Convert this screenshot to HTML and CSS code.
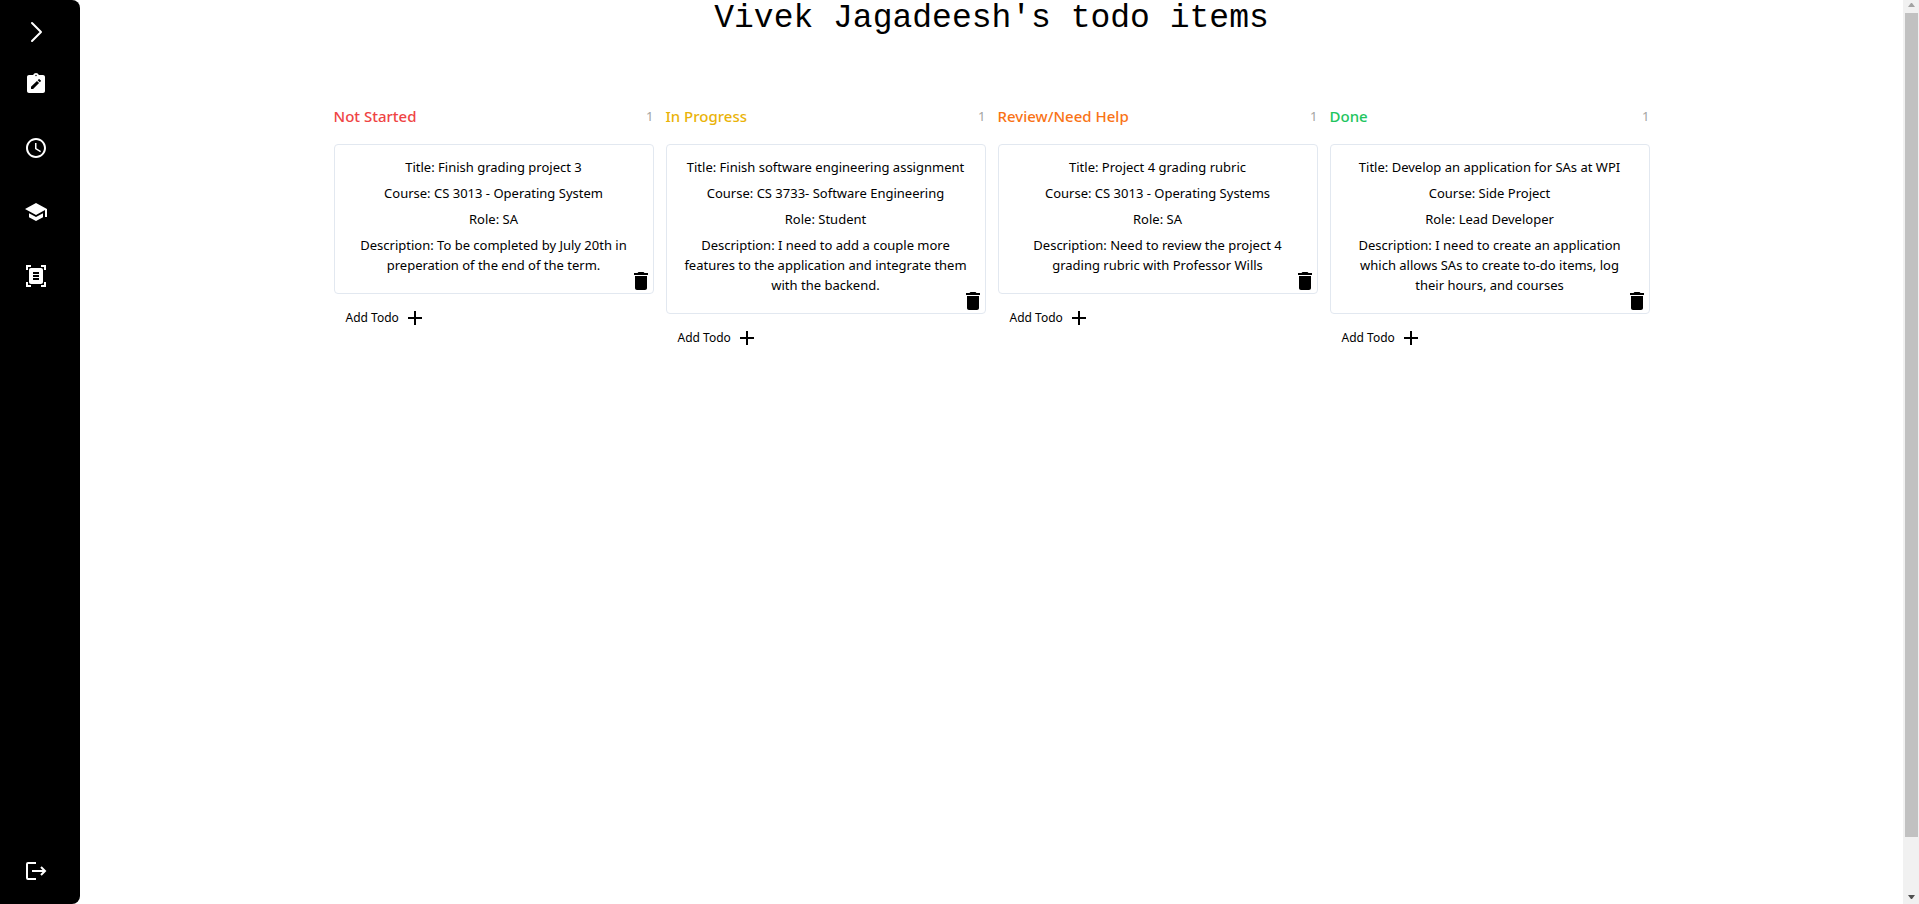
FILE: index.html
```html
<!DOCTYPE html>
<html lang="en">
<head>
<meta charset="utf-8">
<meta name="viewport" content="width=device-width, initial-scale=1">
<title>Todo items</title>
<link rel="stylesheet" href="styles.css">
</head>
<body>
<svg class="sprite" aria-hidden="true">
  <symbol id="trash" viewBox="0 0 24 24"><path d="M6 19c0 1.100.9 2 2 2h8c1.100 0 2-.9 2-2V7H6v12zM19 4h-3.500l-1-1h-5l-1 1H5v2h14V4z"/></symbol>
  <symbol id="plus" viewBox="0 0 24 24"><path d="M19 13h-6v6h-2v-6H5v-2h6V5h2v6h6v2z"/></symbol>
</svg>
<div class="app">
  <nav class="sidebar" aria-label="Main">
    <button class="nav-button expand" aria-label="Expand menu">
      <svg class="icon" viewBox="0 0 24 24"><path d="M8 3l9 9-9 9" fill="none" stroke="currentColor" stroke-width="2" stroke-linecap="round" stroke-linejoin="round"/></svg>
    </button>
    <div class="nav-list">
      <button class="nav-button" aria-label="Todos">
        <svg class="icon" viewBox="0 0 24 24"><path fill-rule="evenodd" d="M19 3h-4.180C14.400 1.840 13.300 1 12 1s-2.400.84-2.820 2H5c-1.100 0-2 .9-2 2v14c0 1.100.9 2 2 2h14c1.100 0 2-.9 2-2V5c0-1.100-.9-2-2-2zM12 2.750a.75.75 0 1 1 0 1.500.75.75 0 0 1 0-1.500zM9.100 17H7v-2.140l5.960-5.960 2.120 2.120L9.100 17zm7.750-7.730l-1.060 1.060-2.120-2.120 1.060-1.060c.2-.2.510-.2.710 0l1.410 1.410c.2.200.2.510 0 .71z"/></svg>
      </button>
      <button class="nav-button" aria-label="Hours">
        <svg class="icon" viewBox="0 0 24 24"><path d="M11.990 2C6.470 2 2 6.480 2 12s4.470 10 9.990 10C17.520 22 22 17.520 22 12S17.520 2 11.990 2zM12 20c-4.420 0-8-3.580-8-8s3.580-8 8-8 8 3.580 8 8-3.580 8-8 8zm.5-13H11v6l5.250 3.150.75-1.230-4.500-2.670z"/></svg>
      </button>
      <button class="nav-button" aria-label="Courses">
        <svg class="icon" viewBox="0 0 24 24"><path d="M5 13.180v4L12 21l7-3.820v-4L12 17l-7-3.820zM12 3L1 9l11 6 9-4.910V17h2V9L12 3z"/></svg>
      </button>
      <button class="nav-button" aria-label="Documents">
        <svg class="icon" viewBox="0 0 24 24"><path d="M7 3H4v3H2V1h5v2zm15 3V1h-5v2h3v3h2zM7 21H4v-3H2v5h5v-2zm13-3v3h-3v2h5v-5h-2zm-1 0c0 1.100-.9 2-2 2H7c-1.100 0-2-.9-2-2V6c0-1.100.9-2 2-2h10c1.100 0 2 .9 2 2v12zM15 8H9v2h6V8zm0 3H9v2h6v-2zm0 3H9v2h6v-2z"/></svg>
      </button>
    </div>
    <button class="nav-button logout" aria-label="Log out">
      <svg class="icon" viewBox="0 0 24 24"><path d="M12 4H4a1 1 0 0 0-1 1v14a1 1 0 0 0 1 1h8M8 12h13M17 8l4 4-4 4" fill="none" stroke="currentColor" stroke-width="2"/></svg>
    </button>
  </nav>
  <main class="content">
    <h1 class="page-title">Vivek Jagadeesh's todo items</h1>
    <div class="board">
      <section class="column">
        <header class="column-header"><h2 class="column-title red">Not Started</h2><span class="count">1</span></header>
        <article class="card">
          <p>Title: Finish grading project 3</p>
          <p>Course: CS 3013 - Operating System</p>
          <p>Role: SA</p>
          <p>Description: To be completed by July 20th in preperation of the end of the term.</p>
          <button class="delete" aria-label="Delete"><svg class="icon"><use href="#trash"/></svg></button>
        </article>
        <button class="add">Add Todo<svg class="icon"><use href="#plus"/></svg></button>
      </section>
      <section class="column">
        <header class="column-header"><h2 class="column-title yellow">In Progress</h2><span class="count">1</span></header>
        <article class="card">
          <p>Title: Finish software engineering assignment</p>
          <p>Course: CS 3733- Software Engineering</p>
          <p>Role: Student</p>
          <p>Description: I need to add a couple more features to the application and integrate them with the backend.</p>
          <button class="delete" aria-label="Delete"><svg class="icon"><use href="#trash"/></svg></button>
        </article>
        <button class="add">Add Todo<svg class="icon"><use href="#plus"/></svg></button>
      </section>
      <section class="column">
        <header class="column-header"><h2 class="column-title orange">Review/Need Help</h2><span class="count">1</span></header>
        <article class="card">
          <p>Title: Project 4 grading rubric</p>
          <p>Course: CS 3013 - Operating Systems</p>
          <p>Role: SA</p>
          <p>Description: Need to review the project 4 grading rubric with Professor Wills</p>
          <button class="delete" aria-label="Delete"><svg class="icon"><use href="#trash"/></svg></button>
        </article>
        <button class="add">Add Todo<svg class="icon"><use href="#plus"/></svg></button>
      </section>
      <section class="column">
        <header class="column-header"><h2 class="column-title green">Done</h2><span class="count">1</span></header>
        <article class="card">
          <p>Title: Develop an application for SAs at WPI</p>
          <p>Course: Side Project</p>
          <p>Role: Lead Developer</p>
          <p>Description: I need to create an application which allows SAs to create to-do items, log their hours, and courses</p>
          <button class="delete" aria-label="Delete"><svg class="icon"><use href="#trash"/></svg></button>
        </article>
        <button class="add">Add Todo<svg class="icon"><use href="#plus"/></svg></button>
      </section>
    </div>
  </main>
  <div class="scrollbar" aria-hidden="true">
    <svg class="arrow up" viewBox="0 0 7 4"><path d="M0 4L3 0h1l3 4z"/></svg>
    <div class="thumb"></div>
    <svg class="arrow" viewBox="0 0 7 4"><path d="M0 0h7L4 4H3z"/></svg>
  </div>
</div>
</body>
</html>
```
FILE: styles.css
```css
* { box-sizing: border-box; }
body {
  margin: 0;
  background: #fff;
  color: #000;
  font-family: "Noto Sans", "Open Sans", sans-serif;
  font-size: 13px;
  line-height: 20px;
}
h1, h2, p { margin: 0; }
button {
  border: 0;
  padding: 0;
  background: none;
  color: inherit;
  font: inherit;
  cursor: pointer;
}
.sprite { display: none; }
.icon { display: block; width: 24px; height: 24px; fill: currentColor; }

.app { display: flex; height: 100vh; overflow: hidden; }

.sidebar {
  display: flex;
  flex-direction: column;
  width: 80px;
  padding: 20px 24px 21px;
  background: #000;
  color: #fff;
  border-radius: 0 8px 8px 0;
}
.nav-button { width: 24px; height: 24px; }
.nav-list { display: flex; flex-direction: column; gap: 40px; margin-top: 28px; }
.logout { margin-top: auto; }

.content { flex: 1; min-width: 0; }
.page-title {
  font-family: "Liberation Mono", monospace;
  font-size: 33px;
  font-weight: 400;
  line-height: 38px;
  text-align: center;
}
.board {
  display: grid;
  grid-template-columns: repeat(4, 1fr);
  align-items: start;
  gap: 12px;
  max-width: 1316px;
  margin: 66px auto 0;
}
.column { display: flex; flex-direction: column; align-items: stretch; }
.column-header {
  display: flex;
  align-items: center;
  justify-content: space-between;
  height: 24px;
  margin-bottom: 16px;
}
.column-title { font-size: 15px; font-weight: 500; line-height: 24px; }
.red { color: #ef4444; }
.yellow { color: #eab308; }
.orange { color: #f97316; }
.green { color: #22c55e; }
.count { color: #a3a3a3; }
.card {
  position: relative;
  display: flex;
  flex-direction: column;
  gap: 6px;
  padding: 12px 16px 18px;
  border: 1px solid #e2e8f0;
  border-radius: 4px;
  text-align: center;
}
.delete { position: absolute; right: 0; bottom: 0; }
.add {
  display: flex;
  align-items: center;
  align-self: flex-start;
  gap: 4px;
  padding: 12px;
  font-size: 12px;
}

.scrollbar {
  display: flex;
  flex-direction: column;
  align-items: center;
  width: 16px;
  padding: 3px 1px 5px 2px;
  background: #f1f1f1;
}
.arrow { width: 7px; height: 4px; fill: #505050; }
.up { fill: #a3a3a3; }
.thumb { width: 100%; height: 92%; margin: 6px 0 auto; background: #c1c1c1; }
```
